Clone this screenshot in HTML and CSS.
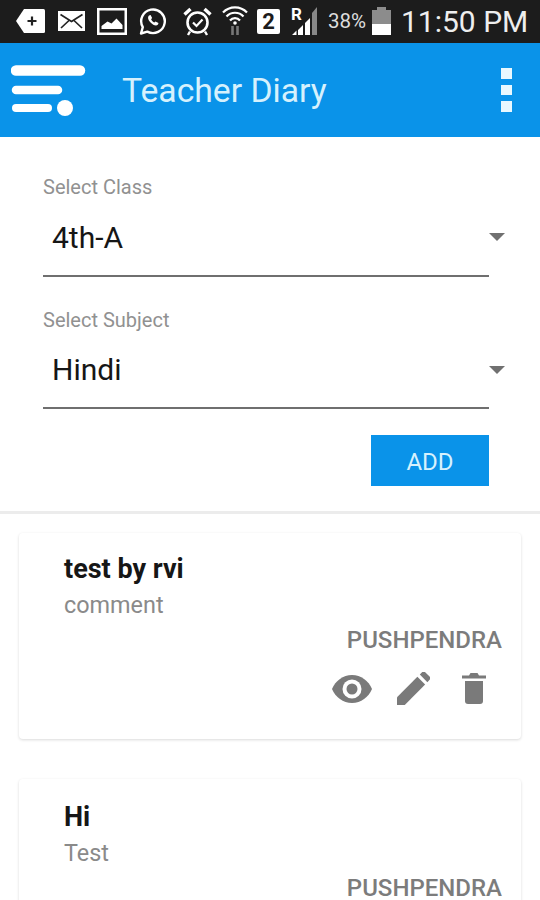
FILE: index.html
```html
<!DOCTYPE html>
<html lang="en">
<head>
<meta charset="utf-8">
<title>Teacher Diary</title>
<link rel="stylesheet" href="styles.css">
</head>
<body>
<div class="screen">
  <header class="status">
    <svg class="si tag" width="29" height="24" viewBox="0 0 29 24"><path d="M0 12 7 1.500 8 0h19.500A1.500 1.500 0 0 1 29 1.500v21a1.500 1.500 0 0 1-1.500 1.500H8z" fill="#fff"/><path d="M16 7.500v9M11.500 12h9" stroke="#222" stroke-width="2.200"/></svg>
    <svg class="si env" width="27" height="20" viewBox="0 0 27 20"><rect width="27" height="20" fill="#fff"/><path d="M2.500 3.500 13.500 10.500 24.500 3.500M3 17 11 9.500M24 17 16 9.500" fill="none" stroke="#222" stroke-width="1.700"/></svg>
    <svg class="si pic" width="30" height="27" viewBox="0 0 30 27"><rect x="1.250" y="1.250" width="27.500" height="24.500" fill="none" stroke="#fff" stroke-width="2.500"/><path d="M4.500 21v-3l6-4.500 4 2 5-5 6 6.500v4z" fill="#fff"/></svg>
    <svg class="si wa" width="28" height="27" viewBox="0 0 28 27"><path d="M2 25.500l1.800-6.300a11.800 11.800 0 1 1 4.500 4.400z" fill="none" stroke="#fff" stroke-width="2.400" stroke-linejoin="round"/><path d="M10 7.500c-2 2-.5 5 1.800 7.200S17 18.500 19 16.500l.5-1.500-3-1.500-1.200 1c-1.300-.5-2.600-1.800-3.200-3.200l1-1.200-1.500-3z" fill="#fff"/></svg>
    <svg class="si alarm" width="29" height="29" viewBox="0 0 29 29"><circle cx="14.500" cy="15.500" r="10" fill="none" stroke="#fff" stroke-width="2.600"/><path d="M10 15.500l3.500 3.500 6-6.500" fill="none" stroke="#fff" stroke-width="2.200"/><path d="M1.500 7.500 7.500 2M27.500 7.500 21.500 2" stroke="#fff" stroke-width="3.400"/><path d="M7 24.500l-2 3.500M22 24.500l2 3.500" stroke="#fff" stroke-width="2.400"/></svg>
    <svg class="si wifi" width="26" height="30" viewBox="0 0 26 30"><path d="M1 7.500a16.500 16.500 0 0 1 24 0M4.500 11.500a11.500 11.500 0 0 1 17 0M8 15.500a6.500 6.500 0 0 1 10 0" fill="none" stroke="#fff" stroke-width="2.200"/><circle cx="13" cy="18" r="1.800" fill="#fff"/><path d="M10.500 21v9M15.500 21v9" stroke="#777" stroke-width="2.600"/></svg>
    <span class="sim">2</span>
    <span class="signal">
      <span class="roam">R</span>
      <svg class="bars" width="27" height="28" viewBox="0 0 27 28"><path d="M1 28h4.500v-4.500zM7 28h5V18l-5 5z" fill="#fff"/><path d="M14 28h5V11l-5 5z" fill="#fff"/><path d="M21 28h5V0l-5 6z" fill="#888"/></svg>
    </span>
    <span class="pct">38%</span>
    <svg class="si batt" width="19" height="28" viewBox="0 0 19 28"><path d="M5 0h9v3h5v25H0V3h5z" fill="#8c8c8c"/><rect y="17" width="19" height="11" fill="#fff"/></svg>
    <span class="clock">11:50 PM</span>
  </header>

  <nav class="appbar">
    <svg class="logo" width="76" height="54" viewBox="0 0 76 54"><path d="M5 7.500H69" stroke="#fff" stroke-width="10.500" stroke-linecap="round"/><path d="M5 27H47" stroke="#fff" stroke-width="8.500" stroke-linecap="round"/><path d="M5 45H37" stroke="#fff" stroke-width="8" stroke-linecap="round"/><circle cx="54" cy="45" r="8" fill="#fff"/></svg>
    <h1 class="title">Teacher Diary</h1>
    <span class="overflow"><i></i><i></i><i></i></span>
  </nav>

  <section class="form">
    <div class="field">
      <label class="field-label">Select Class</label>
      <div class="select"><span class="select-value">4th-A</span><span class="caret"></span></div>
    </div>
    <div class="field">
      <label class="field-label">Select Subject</label>
      <div class="select"><span class="select-value">Hindi</span><span class="caret"></span></div>
    </div>
    <div class="actions"><button class="add">ADD</button></div>
  </section>

  <section class="list">
    <article class="card">
      <h2 class="card-title">test by rvi</h2>
      <p class="card-sub">comment</p>
      <p class="card-author">PUSHPENDRA</p>
      <div class="card-actions">
        <svg class="eye" width="40" height="28" viewBox="0 0 40 28"><path d="M20 0C11 0 3.500 5.800 0 14c3.500 8.200 11 14 20 14s16.500-5.800 20-14C36.500 5.800 29 0 20 0z" fill="#7a7a7a"/><circle cx="20" cy="14" r="9.500" fill="#fff"/><circle cx="20" cy="14" r="5.500" fill="#7a7a7a"/></svg>
        <svg class="pen" width="33" height="33" viewBox="0 0 34 34"><path d="M0 26 21 5l8 8L8 34H0z" fill="#7a7a7a"/><path d="M23.500 2.500 26 0a2 2 0 0 1 2.800 0l5 5a2 2 0 0 1 0 2.800L31.300 10.500z" fill="#7a7a7a"/></svg>
        <svg class="bin" width="24" height="31" viewBox="0 0 24 31"><path d="M3 8h18v20a3 3 0 0 1-3 3H6a3 3 0 0 1-3-3z" fill="#7a7a7a"/><path d="M0 2.500h7l1.500-2.500h7l1.500 2.500h7v3H0z" fill="#7a7a7a"/></svg>
      </div>
    </article>
    <article class="card">
      <h2 class="card-title card-title-low">Hi</h2>
      <p class="card-sub">Test</p>
      <p class="card-author">PUSHPENDRA</p>
    </article>
  </section>
</div>
</body>
</html>
```
FILE: styles.css
```css
* { box-sizing: border-box; }
html, body { margin: 0; padding: 0; height: 900px; overflow: hidden; background: #fff; }
.screen { width: 540px; height: 900px; overflow: hidden; font-family: Roboto, "Liberation Sans", sans-serif; }

.status { height: 43px; background: #1c1c1c; display: flex; align-items: center; padding: 0 0 1px 16px; }
.si { display: block; flex: none; }
.env { margin-left: 13px; }
.pic { margin-left: 12px; }
.wa { margin-left: 12px; }
.alarm { margin-left: 16px; }
.wifi { margin-left: 10px; margin-top: -2px; }
.sim { margin-left: 9px; width: 23px; height: 25px; background: #fff; border-radius: 2px; color: #1c1c1c; font: 700 22px/25px Roboto, sans-serif; text-align: center; flex: none; }
.signal { margin-left: 11px; flex: none; position: relative; width: 27px; height: 28px; }
.bars { display: block; }
.roam { position: absolute; left: 0; top: 0; color: #fff; font: 700 17px/15px Roboto, sans-serif; }
.pct { margin-left: 10px; width: 38px; flex: none; color: #ddd; font-size: 20.500px; white-space: nowrap; }
.batt { margin-left: 6px; }
.clock { margin-left: 10px; color: #eee; font-size: 30px; white-space: nowrap; }

.appbar { height: 94px; background: #0a93e9; display: flex; align-items: center; padding: 0 28px 0 11px; }
.logo { flex: none; }
.title { margin: 0 0 0 35px; padding-top: 1px; flex: 1; color: #d6f1fd; font-size: 33.700px; font-weight: 400; }
.overflow { display: flex; flex-direction: column; gap: 6px; }
.overflow i { display: block; width: 11px; height: 10.500px; background: #e9f8ff; }

.form { padding: 37px 0 0 43px; border-bottom: 3px solid #ececec; height: 377px; }
.field { width: 446px; }
.field + .field { margin-top: 30px; }
.field-label { display: block; color: #919191; font-size: 20px; line-height: 26px; }
.select { height: 76.500px; border-bottom: 2px solid #6f6f6f; display: flex; align-items: center; padding: 0 0 0 9px; position: relative; }
.select-value { color: #161616; font-size: 30px; }
.caret { position: absolute; right: -16px; top: 33px; border-left: 8px solid transparent; border-right: 8px solid transparent; border-top: 8px solid #707070; }
.actions { width: 446px; display: flex; justify-content: flex-end; padding-top: 26px; }
.add { width: 118px; height: 51px; border: 0; padding: 3px 0 0; background: #0a93e9; color: #d6f1fd; font: 400 24px Roboto, sans-serif; }

.list { padding: 19px 19px 0; display: flex; flex-direction: column; gap: 40px; }
.card { height: 206px; padding: 20px 19px 0 45px; background: #fff; border-radius: 4px; box-shadow: 0 1px 3px rgba(0,0,0,.15); flex: none; }
.card-title { margin: 0; color: #161616; font-size: 27px; font-weight: 700; line-height: 32px; }
.card-title-low { padding-top: 2px; }
.card-sub { margin: 5px 0 0; color: #8a8a8a; font-size: 23.400px; line-height: 30px; }
.card-author { margin: 5px 0 0; color: #7c7c7c; font-size: 24px; font-weight: 500; line-height: 30px; text-align: right; }
.card-actions { display: flex; align-items: center; justify-content: flex-end; margin-top: 17px; padding-right: 16px; }
.eye, .pen, .bin { flex: none; display: block; }
.pen { margin-left: 25px; }
.bin { margin-left: 32px; }
```
